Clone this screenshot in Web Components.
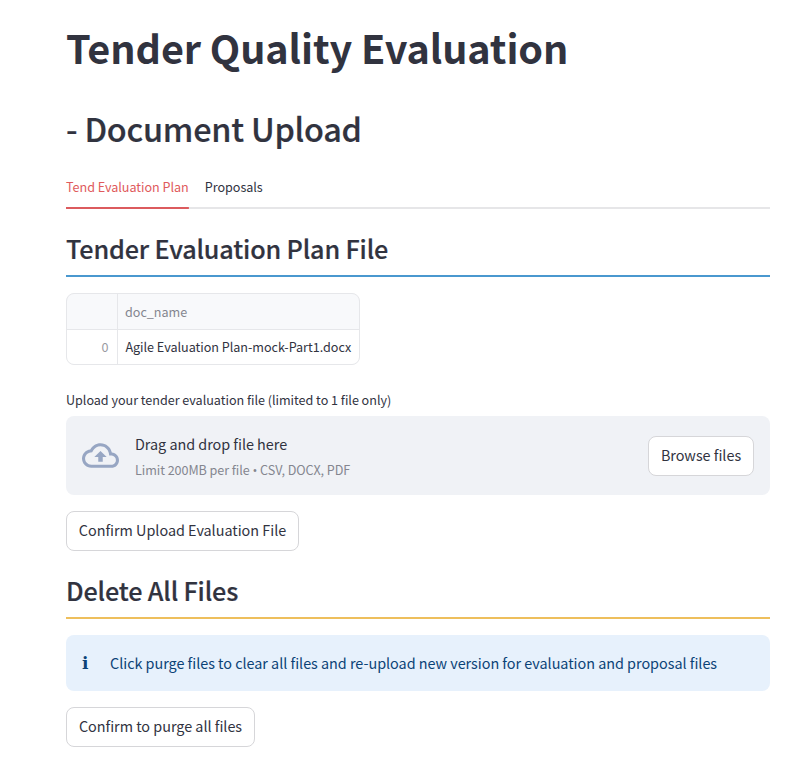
<!DOCTYPE html>
<html lang="en">
<head>
<meta charset="utf-8">
<title>Tender Quality Evaluation</title>
<style>
html,body{margin:0;background:#fff}
body{font-family:"Noto Sans CJK SC","Open Sans",sans-serif;color:#31333f;font-size:14.4px}
</style>
</head>
<body>
<tender-app></tender-app>
<script>
const define = (name, html) => customElements.define(name, class extends HTMLElement {
  connectedCallback() {
    if (this.shadowRoot) return;
    this.attachShadow({ mode: 'open' }).innerHTML = html;
  }
});

define('page-title', `<style>
:host{display:block}
h1{margin:0;font-size:39.6px;font-weight:700;line-height:54px;letter-spacing:-.1px;white-space:nowrap}
</style><h1><slot></slot></h1>`);

define('page-subtitle', `<style>
:host{display:block;margin-top:30px}
h2{margin:0;font-size:32.4px;font-weight:500;line-height:48px;letter-spacing:-.23px;-webkit-text-stroke:.2px currentColor}
</style><h2><slot></slot></h2>`);

define('section-heading', `<style>
:host{display:block;border-bottom:2px solid var(--rule);padding-bottom:10px}
h3{margin:0;font-size:25.2px;font-weight:500;line-height:34px;letter-spacing:-.15px;-webkit-text-stroke:.2px currentColor}
</style><h3><slot></slot></h3>`);

define('tab-bar', `<style>
:host{display:flex;gap:16px;height:40px;margin-top:15px;padding-bottom:2px;background:linear-gradient(#e6e6e8,#e6e6e8) bottom/100% 2px no-repeat}
</style><slot></slot>`);

define('tab-item', `<style>
:host{display:block;height:40px;line-height:40px;font-size:12.6px;padding-bottom:2px;white-space:nowrap;letter-spacing:-.03px}
:host([active]){color:#e05a5c;background:linear-gradient(#dc5b5e,#dc5b5e) bottom/100% 2px no-repeat}
</style><slot></slot>`);

define('data-grid', `<style>
:host{display:grid;grid-template:35px 34px/50px 1fr;gap:1px;width:292px;margin-top:16px;border:1px solid #e6e7ea;border-radius:8px;overflow:hidden;background:#e6e7ea;font-size:12.6px}
div{background:#fff;line-height:34px;padding:0 8.5px 0 7.4px;white-space:nowrap;letter-spacing:-.02px}
.h{background:#f8f9fb;color:#84868f;line-height:36px;padding-left:7px}
.i{color:#9a9ba2;text-align:right}
</style><div class="h"></div><div class="h"><slot name="column"></slot></div><div class="i"><slot name="index"></slot></div><div><slot></slot></div>`);

define('field-label', `<style>
:host{display:block;margin-top:25px;font-size:12.6px;line-height:20px;letter-spacing:-.025px}
</style><slot></slot>`);

define('action-button', `<style>
:host{display:block;width:fit-content}
button{display:block;box-sizing:border-box;width:var(--w);height:40px;padding:0 0 2px;border:1px solid #d6d6d9;border-radius:8px;background:#fff;color:inherit;font:inherit;line-height:36px;white-space:nowrap;letter-spacing:-.02px}
</style><button><slot></slot></button>`);

define('cloud-icon', `<style>:host{display:block;width:37px;height:37px}svg{display:block}</style>
<svg width="37" height="37" viewBox="0 0 24 24" fill="#97a6c3"><path d="M19.35 10.04C18.67 6.59 15.64 4 12 4 9.11 4 6.6 5.64 5.35 8.04 2.34 8.36 0 10.91 0 14c0 3.31 2.69 6 6 6h13c2.76 0 5-2.24 5-5 0-2.64-2.05-4.78-4.65-4.96zM19 18H6c-2.21 0-4-1.79-4-4 0-2.05 1.53-3.76 3.56-3.97l1.07-.11.5-.95C8.08 7.14 9.94 6 12 6c2.62 0 4.88 1.86 5.39 4.43l.3 1.5 1.53.11c1.56.1 2.78 1.41 2.78 2.96 0 1.65-1.35 3-3 3zM8 13h2.55v3h2.9v-3H16l-4-4z"/></svg>`);

define('file-dropzone', `<style>
:host{display:flex;align-items:center;gap:16px;box-sizing:border-box;height:79px;margin-top:6px;padding:0 16px;border-radius:8px;background:#f0f2f6}
.t{flex:1;padding-top:2px}
.a{line-height:26px;letter-spacing:-.03px}
.b{font-size:12.6px;line-height:26px;color:#84868f;letter-spacing:-.06px}
i{font:normal 13px "Open Sans",sans-serif;line-height:0;letter-spacing:0}
</style><cloud-icon></cloud-icon><div class="t"><div class="a">Drag and drop file here</div><div class="b">Limit 200MB per file <i>•</i> CSV, DOCX, PDF</div></div><action-button style="--w:106px">Browse files</action-button>`);

define('info-alert', `<style>
:host{display:flex;align-items:center;box-sizing:border-box;height:56px;margin:16px 0;padding:0 16px 2px;border-radius:8px;background:#e7f1fc;color:#0b4377;letter-spacing:-.025px}
i{width:28px;padding-top:2px;font:700 17px/24px "DejaVu Serif",serif}
span{white-space:nowrap}
</style><i>i</i><span><slot></slot></span>`);

define('tender-app', `<style>
:host{display:block;padding:20px 17px 0 66px}
.up{margin-top:16px}
</style>
<page-title>Tender Quality Evaluation</page-title>
<page-subtitle>- Document Upload</page-subtitle>
<tab-bar><tab-item active>Tend Evaluation Plan</tab-item><tab-item>Proposals</tab-item></tab-bar>
<section-heading style="--rule:#4a98cf;margin-top:22px">Tender Evaluation Plan File</section-heading>
<data-grid><span slot="column">doc_name</span><span slot="index">0</span>Agile Evaluation Plan-mock-Part1.docx</data-grid>
<field-label>Upload your tender evaluation file (limited to 1 file only)</field-label>
<file-dropzone></file-dropzone>
<action-button class="up" style="--w:233px">Confirm Upload Evaluation File</action-button>
<section-heading style="--rule:#eebf5c;margin-top:22px">Delete All Files</section-heading>
<info-alert>Click purge files to clear all files and re-upload new version for evaluation and proposal files</info-alert>
<action-button style="--w:189px">Confirm to purge all files</action-button>`);
</script>
</body>
</html>
